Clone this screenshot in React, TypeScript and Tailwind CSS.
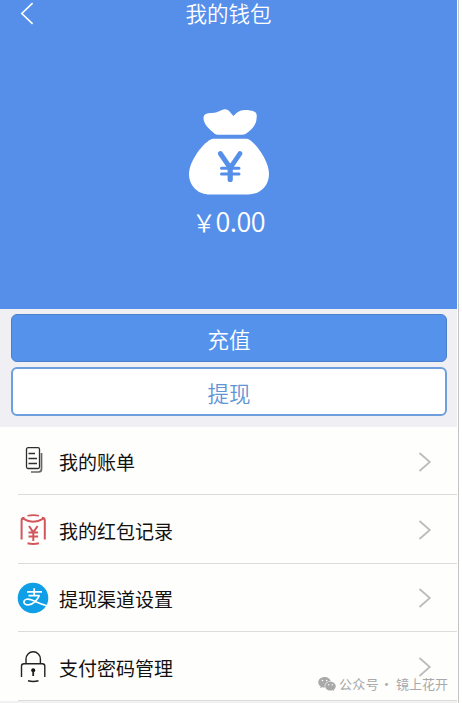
import type { ReactNode } from 'react'
import { AiFillWechat } from 'react-icons/ai'

type MenuItem = {
  id: string
  label: string
  icon: ReactNode
}

const BillIcon = () => (
  <svg width="32" height="32" viewBox="0 0 32 32" fill="none">
    <rect x="9.500" y="1.700" width="13" height="20.800" rx="1.500" stroke="#2e2e2e" strokeWidth="1.300" />
    <path d="M11.500 7.500H18M11.500 12.500H20M11.500 17.500H20" stroke="#2e2e2e" strokeWidth="1.300" />
    <path d="M24.500 7V23Q24.500 26 21.500 26H14" stroke="#666" strokeWidth="1.700" />
  </svg>
)

const RedPacketIcon = () => (
  <svg width="32" height="32" viewBox="0 0 32 32" fill="none" stroke="#d2575c">
    <path d="M4.600 25.500V6.500Q4.600 3.800 7.500 3.800" strokeWidth="2" />
    <path d="M27.800 25.500V6.500Q27.800 3.800 24.900 3.800" strokeWidth="2" />
    <path d="M5 4.200Q16.200 11.200 27.400 4.200" strokeWidth="2" />
    <path d="M10.500 1.800Q16.200 .300 22 1.800" strokeWidth="1.700" />
    <path d="M10.500 29.200Q16.200 30.600 22 29.200" strokeWidth="2" />
    <path d="M12 12L16.300 18.400L20.600 12M16.300 18V27M11.500 18.600H21.100M11.500 22.500H21.100" strokeWidth="2" />
  </svg>
)

const AlipayIcon = () => (
  <svg width="32" height="32" viewBox="0 0 32 32" fill="none">
    <circle cx="16" cy="16" r="15.300" fill="#0e9fe6" />
    <g stroke="#fff" strokeWidth="1.700">
      <path d="M10 9.900H25M17.200 6.200V13.700M11.500 13.700H22.600" />
      <path d="M22.300 13.500C20.500 18 15.800 22.900 11.400 22.900C8.300 22.900 6.500 21.200 7 19.200C7.600 17 11 16.600 14.200 17.800C18.500 19.400 23.500 22 29.800 23.800" />
    </g>
  </svg>
)

const LockIcon = () => (
  <svg width="32" height="32" viewBox="0 0 32 32" fill="none" stroke="#222" strokeWidth="1.400">
    <path d="M9 12.500V8C9 4 12 .800 16.200 .800S23.400 4 23.400 8V12.500" />
    <path d="M4.500 26V15.200Q4.500 12.700 7 12.700H25.300Q27.800 12.700 27.800 15.200V26" />
    <circle cx="16.200" cy="19.300" r="2" fill="#111" stroke="none" />
    <path d="M16.200 19.500V25" strokeWidth="1.800" />
    <path d="M11 29.800Q16.200 31.200 21.500 29.800" strokeWidth="1.600" />
  </svg>
)

const MoneyBag = () => (
  <svg width="80" height="86" viewBox="0 0 80 86" fill="#fff">
    <path d="M26 25C20 20 14.500 15 14.500 9C14.500 5 18 4 23 4C29 4 32 .500 36 .300C40 .200 42 5 44.500 7C47 4.500 50 1 56 1C60 1 62.500 1.500 65 2.500C68 4 68 6 67.500 10C67 17 61 22 56.500 25Q55 25.700 53 25.700H29Q27 25.700 26 25Z" />
    <path d="M24 29.800H58C66 32 80 52 80 65C80 77 71 85.500 59 85.500H21C9 85.500 0 77 0 65C0 52 15 32 24 29.800Z" />
    <g fill="none" stroke="#568fea" strokeLinecap="round">
      <path d="M31.300 44.500L41.200 59L51 44.500" strokeWidth="4.900" />
      <path d="M41.200 57V70.500" strokeWidth="5.200" />
      <path d="M32.500 59.300H50M32.500 65H50" strokeWidth="3" />
    </g>
  </svg>
)

const Chevron = () => (
  <svg width="14" height="22" viewBox="0 0 14 22" fill="none">
    <path d="M1.500 2L11.800 11L1.500 20" stroke="#bcbcbc" strokeWidth="1.800" />
  </svg>
)

const menuItems: MenuItem[] = [
  { id: 'bill', label: '我的账单', icon: <BillIcon /> },
  { id: 'packet', label: '我的红包记录', icon: <RedPacketIcon /> },
  { id: 'channel', label: '提现渠道设置', icon: <AlipayIcon /> },
  { id: 'password', label: '支付密码管理', icon: <LockIcon /> },
]

const WalletHeader = () => (
  <header className="flex h-[309px] flex-col items-center bg-[#568fea] text-white">
    <div className="grid h-[27px] w-full grid-cols-[60px_1fr_60px] items-start">
      <svg className="mt-[2px] ml-5" width="15" height="24" viewBox="0 0 15 24" fill="none">
        <path d="M12.600 1.200L1.800 11.500L12.600 21.800" stroke="#fff" strokeWidth="1.600" />
      </svg>
      <h1 className="text-center text-[21.500px] leading-[25px] font-[350]">我的钱包</h1>
    </div>
    <div className="mt-[82px]">
      <MoneyBag />
    </div>
    <p className="mt-[8px] text-[27px] leading-9 font-[350] tracking-[-0.5px]">
      <span className="text-[24px]">￥</span>0.00
    </p>
  </header>
)

export default function App() {
  return (
    <div className="relative h-[703px] w-[462px] overflow-hidden bg-white font-['Noto_Sans_CJK_SC',sans-serif]">
      <div className="flex h-full w-[459px] flex-col border-r border-[#c4c4c4] pr-px">
        <WalletHeader />
        <div className="flex h-[118px] shrink-0 flex-col gap-[5px] bg-[#efeff4] pt-[5px] pr-[10px] pl-[11px]">
          <button className="h-[48px] rounded-md border border-[#4d80cb] bg-[#5592ec] pt-[2px] text-[21.500px] leading-none font-[350] text-white">
            充值
          </button>
          <button className="h-[49px] rounded-md border-2 border-[#6e9edb] bg-white pt-[2px] text-[21.500px] leading-none font-[350] text-[#6094d5]">
            提现
          </button>
        </div>
        <ul className="bg-[#fefefd] pl-[18px]">
          {menuItems.map((item) => (
            <li
              key={item.id}
              className="flex h-[68.500px] items-center border-b border-[#dcdcdc] pt-[2px] pr-[25px] text-[19px] text-[#111] first:h-[68px]"
            >
              <span className="-ml-px w-8">{item.icon}</span>
              <span className="ml-[10px] flex-1 pt-[2px]">{item.label}</span>
              <Chevron />
            </li>
          ))}
        </ul>
        <div className="flex-1 bg-[#f1f1f1]" />
      </div>
      <div className="absolute right-[14px] bottom-[9px] flex items-center text-[13px] leading-5 whitespace-nowrap text-[#a9a9a9]">
        <AiFillWechat className="mr-[2px] h-[20px] w-[20px]" />
        <span className="tracking-[0.3px]">公众号</span>
        <span className="mr-[3px] ml-px">·</span>
        <span>镜上花开</span>
      </div>
    </div>
  )
}
